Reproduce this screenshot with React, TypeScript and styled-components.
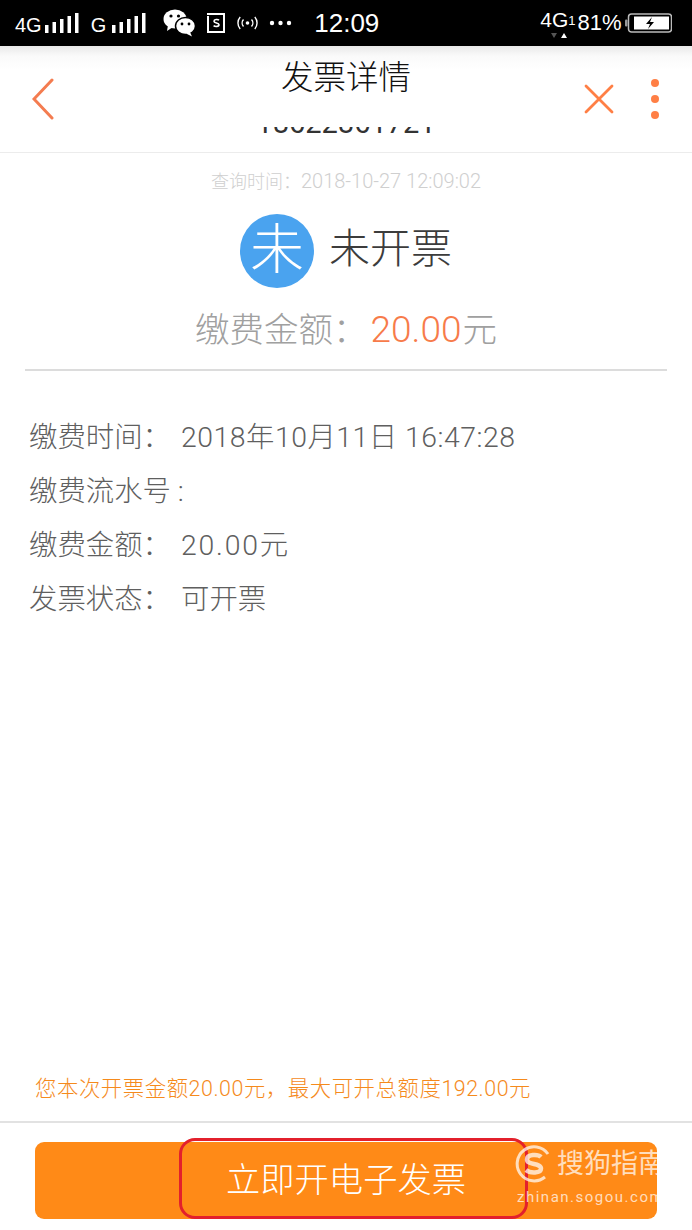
import React from "react";
import styled, { createGlobalStyle } from "styled-components";

const GlobalStyle = createGlobalStyle`
  html, body {
    margin: 0;
    padding: 0;
    background: #fff;
  }
  body {
    font-family: "Roboto", "Noto Sans CJK SC", sans-serif;
  }
`;

const Page = styled.div`
  width: 692px;
  height: 1230px;
  display: flex;
  flex-direction: column;
  overflow: hidden;
  background: #fff;
`;

const StatusBar = styled.div`
  height: 46px;
  flex: none;
  background: #000;
  color: #fff;
  display: flex;
  align-items: center;
  padding-left: 15px;
  font-family: "Liberation Sans", "Noto Sans CJK SC", sans-serif;
`;

const StatusText = styled.span<{ $size: number; $left?: number; $shift?: number }>`
  font-size: ${(p) => p.$size}px;
  margin-left: ${(p) => p.$left || 0}px;
  margin-top: ${(p) => (p.$shift || 0) * 2}px;
  line-height: 46px;
  white-space: nowrap;
`;

const StatusIcon = styled.svg<{ $left?: number }>`
  flex: none;
  display: block;
  margin-left: ${(p) => p.$left || 0}px;
`;

const NetworkBadge = styled.span`
  position: relative;
  display: flex;
  align-items: center;
  margin-left: 161px;
`;

const NetworkArrows = styled.svg`
  position: absolute;
  left: 11px;
  top: 30px;
`;

const Nav = styled.div`
  height: 107px;
  flex: none;
  box-sizing: border-box;
  display: flex;
  flex-direction: column;
  border-bottom: 1px solid #ececec;
  background: linear-gradient(#e9e9e9 0, #fafafa 10px, #fff 24px);
`;

const NavRow = styled.div`
  height: 81px;
  flex: none;
  display: grid;
  grid-template-columns: 1fr auto 1fr;
`;

const BackIcon = styled.svg`
  margin: 32px 0 0 32px;
  display: block;
`;

const Title = styled.div`
  font-size: 32.5px;
  line-height: 64px;
  color: #111;
  font-weight: 300;
`;

const NavActions = styled.div`
  display: flex;
  justify-content: flex-end;
  align-items: flex-start;
  gap: 36px;
  padding: 36px 32px 0 0;
`;

const CloseIcon = styled.svg`
  margin-top: 2px;
`;

const MoreIcon = styled.svg`
  margin-top: -4px;
`;

const ClippedRow = styled.div`
  height: 7px;
  flex: none;
  overflow: hidden;
  display: flex;
  justify-content: center;
  align-items: flex-end;
`;

const ClippedNumber = styled.div`
  font-size: 29px;
  line-height: 29px;
  margin-bottom: -4px;
  color: #333;
`;

const Summary = styled.div`
  display: flex;
  flex-direction: column;
  align-items: center;
  margin: 0 25px;
  height: 218px;
  flex: none;
  box-sizing: border-box;
  border-bottom: 2px solid #dcdcdc;
`;

const QueryTime = styled.div`
  font-size: 18px;
  line-height: 24px;
  margin-top: 16px;
  color: #cfcfcf;
  font-weight: 300;
`;

const QueryDigits = styled.span`
  font-size: 20px;
`;

const StatusRow = styled.div`
  display: flex;
  align-items: center;
  gap: 15px;
  margin-top: 20px;
`;

const StatusBadge = styled.div`
  width: 74px;
  height: 74px;
  border-radius: 50%;
  background: #4aa3ef;
  color: #fff;
  font-size: 54px;
  font-weight: 300;
  line-height: 74px;
  text-align: center;
`;

const StatusLabel = styled.div`
  font-size: 41px;
  line-height: 70px;
  padding-bottom: 4px;
  color: #3c3c3c;
  font-weight: 300;
`;

const AmountLine = styled.div`
  display: flex;
  align-items: baseline;
  margin-top: 17px;
  font-size: 34.5px;
  line-height: 50px;
  color: #a0a0a0;
  font-weight: 300;
`;

const AmountValue = styled.span`
  color: #f77b4a;
  font-size: 37px;
  margin-left: 3px;
`;

const AmountUnit = styled.span`
  margin-left: 1px;
`;

const Details = styled.div`
  flex: 1;
  padding: 36px 0 0 29px;
`;

const DetailRow = styled.div`
  display: flex;
  height: 54px;
  align-items: center;
  font-size: 28.4px;
  color: #5f5f5f;
  font-weight: 300;
`;

const DetailLabel = styled.span`
  width: 152px;
  flex: none;
  white-space: nowrap;
`;

const DetailValue = styled.span<{ $spacing: number }>`
  letter-spacing: ${(p) => p.$spacing}px;
`;

const Note = styled.div`
  flex: none;
  height: 66px;
  box-sizing: border-box;
  padding: 19px 0 0 35px;
  font-size: 21.4px;
  line-height: 26px;
  color: #f58a1c;
  letter-spacing: 0.55px;
  font-weight: 300;
  border-bottom: 2px solid #e2e2e2;
`;

const Footer = styled.div`
  position: relative;
  flex: none;
  height: 107px;
  box-sizing: border-box;
  padding: 19px 35px 0;
`;

const SubmitButton = styled.div`
  height: 77px;
  border-radius: 9px;
  background: #ff8a17;
  color: #fff;
  font-size: 34.3px;
  font-weight: 300;
  line-height: 77px;
  text-align: center;
`;

const Highlight = styled.div`
  position: absolute;
  left: 179px;
  top: 15px;
  width: 349px;
  height: 81px;
  box-sizing: border-box;
  border: 3px solid #e3202c;
  border-radius: 16px;
`;

const Watermark = styled.div`
  position: absolute;
  left: 515px;
  top: 21px;
  width: 177px;
  color: rgba(255, 255, 255, 0.72);
`;

const WatermarkTop = styled.div`
  display: flex;
  align-items: center;
  gap: 5px;
  font-size: 27px;
  line-height: 40px;
  white-space: nowrap;
`;

const WatermarkUrl = styled.div`
  font-size: 15px;
  line-height: 18px;
  letter-spacing: 1.5px;
  margin: 4px 0 0 2px;
  white-space: nowrap;
`;

const details = [
  { label: "缴费时间\uFF1A", value: "2018年10月11日 16:47:28", spacing: 0.5 },
  { label: "缴费流水号 :", value: "", spacing: 0 },
  { label: "缴费金额\uFF1A", value: "20.00元", spacing: 1.8 },
  { label: "发票状态\uFF1A", value: "可开票", spacing: 0 },
];

const SignalBars: React.FC<{ left: number }> = ({ left }) => (
  <StatusIcon $left={left} width="35" height="22" viewBox="0 0 35 22" fill="#fff">
    <rect x="0" y="13" width="3.5" height="8" />
    <rect x="7.5" y="10" width="3.5" height="11" />
    <rect x="15" y="7" width="3.5" height="14" />
    <rect x="22.5" y="4" width="3.5" height="17" />
    <rect x="30" y="1" width="3.5" height="20" />
  </StatusIcon>
);

export default function App() {
  return (
    <Page>
      <GlobalStyle />
      <StatusBar>
        <StatusText $size={20} $shift={2}>4G</StatusText>
        <SignalBars left={3} />
        <StatusText $size={20} $left={11} $shift={2}>G</StatusText>
        <SignalBars left={6} />
        <StatusIcon $left={16} width="33" height="28" viewBox="0 0 33 28" fill="#fff">
          <ellipse cx="12" cy="10" rx="11.5" ry="9.5" />
          <path d="M5 16l-1 6 6-4z" />
          <ellipse cx="22.5" cy="17" rx="10" ry="8.5" stroke="#000" strokeWidth="1.5" />
          <path d="M27 23l2 4.5-6-3z" />
          <circle cx="8" cy="7" r="1.6" fill="#000" />
          <circle cx="15.5" cy="7" r="1.6" fill="#000" />
          <circle cx="19" cy="15" r="1.4" fill="#000" />
          <circle cx="26" cy="15" r="1.4" fill="#000" />
        </StatusIcon>
        <StatusIcon $left={10} width="20" height="22" viewBox="0 0 20 22" fill="none" stroke="#fff" strokeWidth="2">
          <path d="M1 2h17v18H2V4" />
          <path d="M13 8.2c-1-1-5-1-5 1 0 2.2 5 1.3 5 3.6 0 2-4 2-5.4.8" strokeWidth="1.6" />
        </StatusIcon>
        <StatusIcon $left={11} width="21" height="14" viewBox="0 0 21 14" fill="none" stroke="#fff" strokeWidth="1.4">
          <circle cx="10.5" cy="7" r="1.8" fill="#fff" stroke="none" />
          <path d="M6.5 3.5c-1.8 2-1.8 5 0 7M14.5 3.5c1.8 2 1.8 5 0 7M3.2 1c-3 3.5-3 8.5 0 12M17.8 1c3 3.5 3 8.5 0 12" />
        </StatusIcon>
        <StatusIcon $left={11} width="23" height="6" viewBox="0 0 23 6" fill="#fff">
          <circle cx="3" cy="3" r="2.2" />
          <circle cx="11.5" cy="3" r="2.2" />
          <circle cx="20" cy="3" r="2.2" />
        </StatusIcon>
        <StatusText $size={26} $left={22}>12:09</StatusText>
        <NetworkBadge>
          <StatusText $size={21} $shift={-3}>4G</StatusText>
          <StatusText $size={13} $shift={-2}>1</StatusText>
          <NetworkArrows width="18" height="7" viewBox="0 0 18 7">
            <path d="M0 1h6L3 6z" fill="#555" />
            <path d="M10 6h6l-3-5z" fill="#fff" />
          </NetworkArrows>
        </NetworkBadge>
        <StatusText $size={22} $left={2}>81%</StatusText>
        <StatusIcon $left={3} width="47" height="20" viewBox="0 0 47 20">
          <rect x="3.5" y="1" width="43" height="18" rx="3" fill="none" stroke="#bbb" strokeWidth="1.5" />
          <rect x="9" y="3.5" width="35" height="13" fill="#fff" />
          <rect x="0" y="6.5" width="2.5" height="7" rx="1" fill="#999" />
          <path d="M27 4l-6 7h4l-2 5 6-7h-4z" fill="#000" />
        </StatusIcon>
      </StatusBar>

      <Nav>
        <NavRow>
          <BackIcon width="22" height="42" viewBox="0 0 22 42" fill="none" stroke="#f47c50" strokeWidth="3" strokeLinecap="round">
            <path d="M20 2L2 21l18 19" />
          </BackIcon>
          <Title>发票详情</Title>
          <NavActions>
            <CloseIcon width="30" height="30" viewBox="0 0 30 30" fill="none" stroke="#ff7f45" strokeWidth="2.8" strokeLinecap="round">
              <path d="M2 2l26 26M28 2L2 28" />
            </CloseIcon>
            <MoreIcon width="10" height="42" viewBox="0 0 10 42" fill="#ff7f45">
              <circle cx="5" cy="5" r="4" />
              <circle cx="5" cy="21" r="4" />
              <circle cx="5" cy="37" r="4" />
            </MoreIcon>
          </NavActions>
        </NavRow>
        <ClippedRow>
          <ClippedNumber>18622861721</ClippedNumber>
        </ClippedRow>
      </Nav>

      <Summary>
        <QueryTime>
          {"查询时间\uFF1A"}<QueryDigits>2018-10-27 12:09:02</QueryDigits>
        </QueryTime>
        <StatusRow>
          <StatusBadge>未</StatusBadge>
          <StatusLabel>未开票</StatusLabel>
        </StatusRow>
        <AmountLine>
          {"缴费金额\uFF1A"}
          <AmountValue>20.00</AmountValue>
          <AmountUnit>元</AmountUnit>
        </AmountLine>
      </Summary>

      <Details>
        {details.map((row) => (
          <DetailRow key={row.label}>
            <DetailLabel>{row.label}</DetailLabel>
            <DetailValue $spacing={row.spacing}>{row.value}</DetailValue>
          </DetailRow>
        ))}
      </Details>

      <Note>{"您本次开票金额20.00元\uFF0C最大可开总额度192.00元"}</Note>

      <Footer>
        <SubmitButton>立即开电子发票</SubmitButton>
        <Highlight />
        <Watermark>
          <WatermarkTop>
            <svg width="37" height="40" viewBox="0 0 37 40" fill="none" stroke="currentColor">
              <path d="M30 33A17 17 0 1 1 33 10" strokeWidth="3" />
              <path d="M26 13c-3-3-14-3-14 2.5 0 6 14 3 14 9 0 5-11 5-15 1.5" strokeWidth="4.5" />
            </svg>
            搜狗指南
          </WatermarkTop>
          <WatermarkUrl>zhinan.sogou.com</WatermarkUrl>
        </Watermark>
      </Footer>
    </Page>
  );
}
